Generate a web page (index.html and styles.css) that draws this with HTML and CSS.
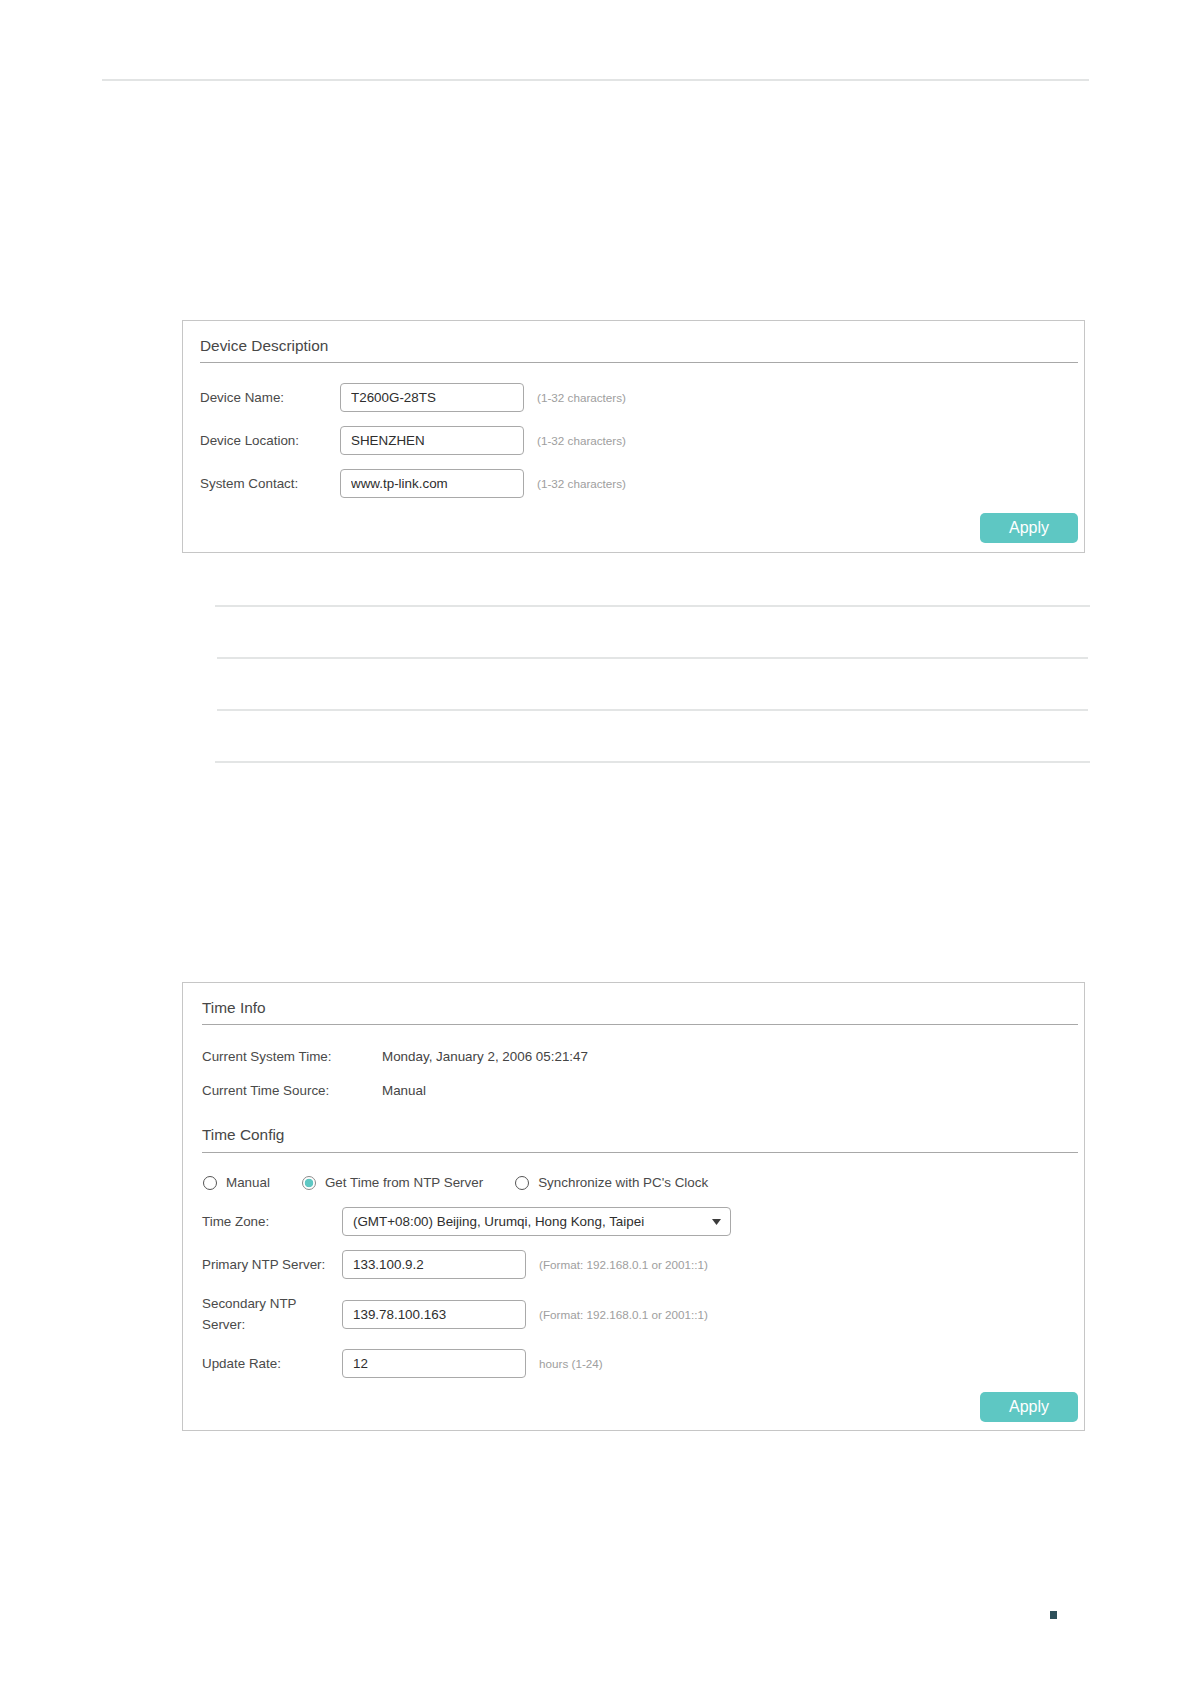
FILE: index.html
```html
<!DOCTYPE html>
<html lang="en">
<head>
    <meta charset="UTF-8">
    <meta name="viewport" content="width=device-width, initial-scale=1.0">
    <title>System Info</title>
    <link rel="stylesheet" href="styles.css">
</head>
<body>
    <div class="top-rule"></div>

    <div class="panel panel-device">
        <div class="panel-title">Device Description</div>

        <div class="field first">
            <label class="field-label" for="devName">Device Name:</label>
            <input class="field-input" type="text" id="devName" value="T2600G-28TS">
            <span class="hint">(1-32 characters)</span>
        </div>
        <div class="field">
            <label class="field-label" for="devLoc">Device Location:</label>
            <input class="field-input" type="text" id="devLoc" value="SHENZHEN">
            <span class="hint">(1-32 characters)</span>
        </div>
        <div class="field">
            <label class="field-label" for="sysContact">System Contact:</label>
            <input class="field-input" type="text" id="sysContact" value="www.tp-link.com">
            <span class="hint">(1-32 characters)</span>
        </div>

        <div class="actions">
            <button class="apply">Apply</button>
        </div>
    </div>

    <div class="rules">
        <div class="rule"></div>
        <div class="rule inset"></div>
        <div class="rule inset"></div>
        <div class="rule"></div>
    </div>

    <div class="panel panel-time">
        <div class="panel-title">Time Info</div>

        <div class="info-row first">
            <span class="info-label">Current System Time:</span>
            <span class="info-value">Monday, January 2, 2006 05:21:47</span>
        </div>
        <div class="info-row">
            <span class="info-label">Current Time Source:</span>
            <span class="info-value">Manual</span>
        </div>

        <div class="panel-title sub">Time Config</div>

        <div class="radio-row">
            <label class="radio"><span class="radio-dot"></span>Manual</label>
            <label class="radio checked"><span class="radio-dot"></span>Get Time from NTP Server</label>
            <label class="radio"><span class="radio-dot"></span>Synchronize with PC's Clock</label>
        </div>

        <div class="field">
            <span class="field-label">Time Zone:</span>
            <div class="select">
                <span>(GMT+08:00) Beijing, Urumqi, Hong Kong, Taipei</span>
                <svg width="9" height="6" viewBox="0 0 9 6"><path d="M0 0H9L4.5 6Z" fill="#3c3c3c"/></svg>
            </div>
        </div>
        <div class="field">
            <label class="field-label" for="ntp1">Primary NTP Server:</label>
            <input class="field-input" type="text" id="ntp1" value="133.100.9.2">
            <span class="hint">(Format: 192.168.0.1 or 2001::1)</span>
        </div>
        <div class="field">
            <label class="field-label" for="ntp2">Secondary NTP Server:</label>
            <input class="field-input" type="text" id="ntp2" value="139.78.100.163">
            <span class="hint">(Format: 192.168.0.1 or 2001::1)</span>
        </div>
        <div class="field">
            <label class="field-label" for="rate">Update Rate:</label>
            <input class="field-input" type="text" id="rate" value="12">
            <span class="hint">hours (1-24)</span>
        </div>

        <div class="actions">
            <button class="apply">Apply</button>
        </div>
    </div>

    <div class="page-mark"></div>
</body>
</html>
```
FILE: styles.css
```css
body {
    margin: 0;
    font-family: "Liberation Sans", Arial, sans-serif;
    font-size: 13.4px;
    color: #444;
    background: #fff;
}

.top-rule {
    margin: 79px 102px 0;
    height: 2px;
    background: #e2e4e4;
}

.panel {
    box-sizing: border-box;
    width: 903px;
    margin-left: 182px;
    border: 1px solid #c6c6c6;
    padding: 0 6px 8px 17px;
}

.panel-device {
    margin-top: 239px;
    padding-bottom: 9px;
}

.panel-time {
    margin-top: 219px;
    padding-left: 19px;
}

.panel-title {
    font-size: 15.4px;
    line-height: 20px;
    color: #474747;
    padding: 15px 0 6px;
    border-bottom: 1px solid #a8a8a8;
}

.panel-title.sub {
    padding-top: 24px;
    padding-bottom: 7px;
}

.field {
    display: flex;
    align-items: center;
    margin-top: 14px;
}

.field.first {
    margin-top: 20px;
}

.field-label {
    flex: 0 0 140px;
    box-sizing: border-box;
    padding-right: 8px;
    line-height: 21px;
    color: #4a4a4a;
}

.field-input {
    box-sizing: border-box;
    width: 184px;
    height: 29px;
    padding: 0 10px;
    border: 1px solid #a9a9a9;
    border-radius: 4px;
    font: inherit;
    color: #2e2e2e;
    background: #fff;
}

.hint {
    margin-left: 13px;
    font-size: 11.7px;
    color: #9e9e9e;
}

.select {
    box-sizing: border-box;
    width: 389px;
    height: 29px;
    display: flex;
    align-items: center;
    justify-content: space-between;
    padding: 0 9px 0 10px;
    border: 1px solid #a9a9a9;
    border-radius: 4px;
    color: #2e2e2e;
}

.info-row {
    display: flex;
    line-height: 20px;
    margin-top: 14px;
}

.info-row.first {
    margin-top: 22px;
}

.info-label {
    flex: 0 0 180px;
    color: #4a4a4a;
}

.info-value {
    color: #444;
}

.radio-row {
    display: flex;
    gap: 31px;
    margin-top: 20px;
    line-height: 20px;
}

.radio {
    display: flex;
    align-items: center;
    gap: 9px;
    color: #4a4a4a;
}

.radio-dot {
    box-sizing: border-box;
    width: 14px;
    height: 14px;
    border: 1.3px solid #555;
    border-radius: 50%;
    margin-left: 1px;
}

.radio.checked .radio-dot {
    border-color: #8a8a8a;
    background: radial-gradient(circle, #5ec7c3 0 4px, #fff 4.6px);
}

.actions {
    display: flex;
    justify-content: flex-end;
    margin-top: 15px;
}

.panel-time .actions {
    margin-top: 14px;
}

.apply {
    width: 98px;
    height: 30px;
    border: none;
    border-radius: 5px;
    background: #5ec7c3;
    color: #fff;
    font-family: inherit;
    font-size: 16px;
    cursor: pointer;
}

.rules {
    width: 875px;
    margin-left: 215px;
}

.rule {
    height: 2px;
    background: #e3e5e5;
    margin-top: 50px;
}

.rules .rule:first-child {
    margin-top: 52px;
}

.rule.inset {
    margin-left: 2px;
    margin-right: 2px;
}

.page-mark {
    width: 7px;
    height: 8px;
    margin: 180px 0 0 1050px;
    background: #2d4f5a;
}
```
